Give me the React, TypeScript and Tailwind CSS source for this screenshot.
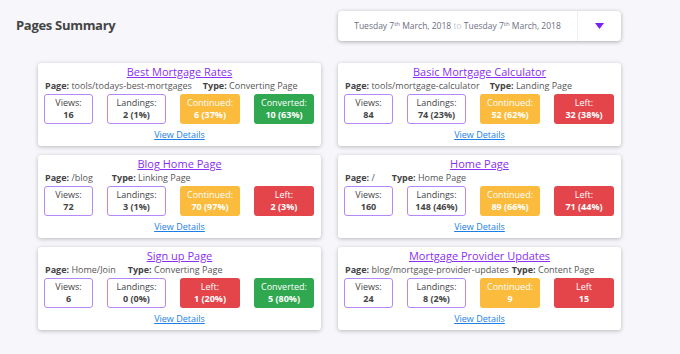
type Stat = { label: string; value: string; kind: "plain" | "orange" | "red" | "green" };

type PageCard = {
  title: string;
  page: string;
  type: string;
  typeGap: string;
  stats: Stat[];
};

const cards: PageCard[] = [
  {
    title: "Best Mortgage Rates",
    page: "tools/todays-best-mortgages",
    type: "Converting Page",
    typeGap: "mr-[11px]",
    stats: [
      { label: "Views:", value: "16", kind: "plain" },
      { label: "Landings:", value: "2 (1%)", kind: "plain" },
      { label: "Continued:", value: "6 (37%)", kind: "orange" },
      { label: "Converted:", value: "10 (63%)", kind: "green" },
    ],
  },
  {
    title: "Basic Mortgage Calculator",
    page: "tools/mortgage-calculator",
    type: "Landing Page",
    typeGap: "mr-[10px]",
    stats: [
      { label: "Views:", value: "84", kind: "plain" },
      { label: "Landings:", value: "74 (23%)", kind: "plain" },
      { label: "Continued:", value: "52 (62%)", kind: "orange" },
      { label: "Left:", value: "32 (38%)", kind: "red" },
    ],
  },
  {
    title: "Blog Home Page",
    page: "/blog",
    type: "Linking Page",
    typeGap: "mr-[19px]",
    stats: [
      { label: "Views:", value: "72", kind: "plain" },
      { label: "Landings:", value: "3 (1%)", kind: "plain" },
      { label: "Continued:", value: "70 (97%)", kind: "orange" },
      { label: "Left:", value: "2 (3%)", kind: "red" },
    ],
  },
  {
    title: "Home Page",
    page: "/",
    type: "Home Page",
    typeGap: "mr-[17px]",
    stats: [
      { label: "Views:", value: "160", kind: "plain" },
      { label: "Landings:", value: "148 (46%)", kind: "plain" },
      { label: "Continued:", value: "89 (66%)", kind: "orange" },
      { label: "Left:", value: "71 (44%)", kind: "red" },
    ],
  },
  {
    title: "Sign up Page",
    page: "Home/Join",
    type: "Converting Page",
    typeGap: "mr-[12px]",
    stats: [
      { label: "Views:", value: "6", kind: "plain" },
      { label: "Landings:", value: "0 (0%)", kind: "plain" },
      { label: "Left:", value: "1 (20%)", kind: "red" },
      { label: "Converted:", value: "5 (80%)", kind: "green" },
    ],
  },
  {
    title: "Mortgage Provider Updates",
    page: "blog/mortgage-provider-updates",
    type: "Content Page",
    typeGap: "mr-[3px]",
    stats: [
      { label: "Views:", value: "24", kind: "plain" },
      { label: "Landings:", value: "8 (2%)", kind: "plain" },
      { label: "Continued:", value: "9", kind: "orange" },
      { label: "Left", value: "15", kind: "red" },
    ],
  },
];

const boxWidths = ["w-[49px]", "w-[59px]", "w-[60px]", "w-[60px]"];

const kindClass: Record<Stat["kind"], string> = {
  plain: "border border-[#b887f7] bg-white text-[#444]",
  orange: "bg-[#fbbb3c] text-white",
  red: "bg-[#e3454b] text-white",
  green: "bg-[#2fa850] text-white",
};

function StatBox({ stat, width }: { stat: Stat; width: string }) {
  return (
    <div
      className={`${width} ${kindClass[stat.kind]} h-[30px] rounded-[3px] flex flex-col items-center justify-center leading-[12px] text-[9px]`}
    >
      <span>{stat.label}</span>
      <span className="font-bold">{stat.value}</span>
    </div>
  );
}

function Card({ card }: { card: PageCard }) {
  return (
    <div className="bg-white rounded-[3px] shadow-[0_1px_4px_rgba(0,0,0,0.25)] px-[6px] pt-[2px] pb-[5px] flex flex-col">
      <a href="#" className="self-center text-[11px] leading-[14px] text-[#8b2ff3] underline">
        {card.title}
      </a>
      <div className="mt-[1px] text-[9px] leading-[12px] text-[#555] whitespace-nowrap pl-[1px]">
        <span className={card.typeGap}>
          <span className="font-bold text-[#444]">Page:</span> {card.page}
        </span>
        <span className="font-bold text-[#444]">Type:</span> {card.type}
      </div>
      <div className="mt-[2px] flex justify-between pr-[1px]">
        {card.stats.map((s, i) => (
          <StatBox key={i} stat={s} width={boxWidths[i]} />
        ))}
      </div>
      <a href="#" className="self-center mt-[5px] text-[9px] leading-[12px] text-[#1b7fe3] underline">
        View Details
      </a>
    </div>
  );
}

export default function App() {
  return (
    <div className="w-[680px] h-[354px] bg-[#f6f6fb] font-['Open_Sans',sans-serif] overflow-hidden">
      <header className="flex items-center pt-[11px] pl-[16px]">
        <h1 className="w-[322px] text-[13px] font-bold text-[#444] tracking-[-0.3px]">Pages Summary</h1>
        <div className="w-[283px] h-[30px] bg-white rounded-[4px] shadow-[0_1px_4px_rgba(0,0,0,0.3)] flex items-center">
          <div className="w-[239px] text-center text-[8.5px] text-[#6e6e82] whitespace-nowrap">
            Tuesday 7<sup className="text-[6px]">th</sup> March, 2018 <span className="text-[#c9c9d3]">to</span> Tuesday 7
            <sup className="text-[6px]">th</sup> March, 2018
          </div>
          <div className="h-full border-l border-[#eeeef2] flex-1 flex items-center justify-center">
            <svg width="9" height="6" viewBox="0 0 9 6">
              <path d="M0 0 H9 L4.5 6 Z" fill="#7b1ff5" />
            </svg>
          </div>
        </div>
      </header>
      <div className="mt-[22px] ml-[38px] grid grid-cols-[283px_283px] gap-x-[17px] gap-y-[9px]">
        {cards.map((c) => (
          <Card key={c.title} card={c} />
        ))}
      </div>
    </div>
  );
}
